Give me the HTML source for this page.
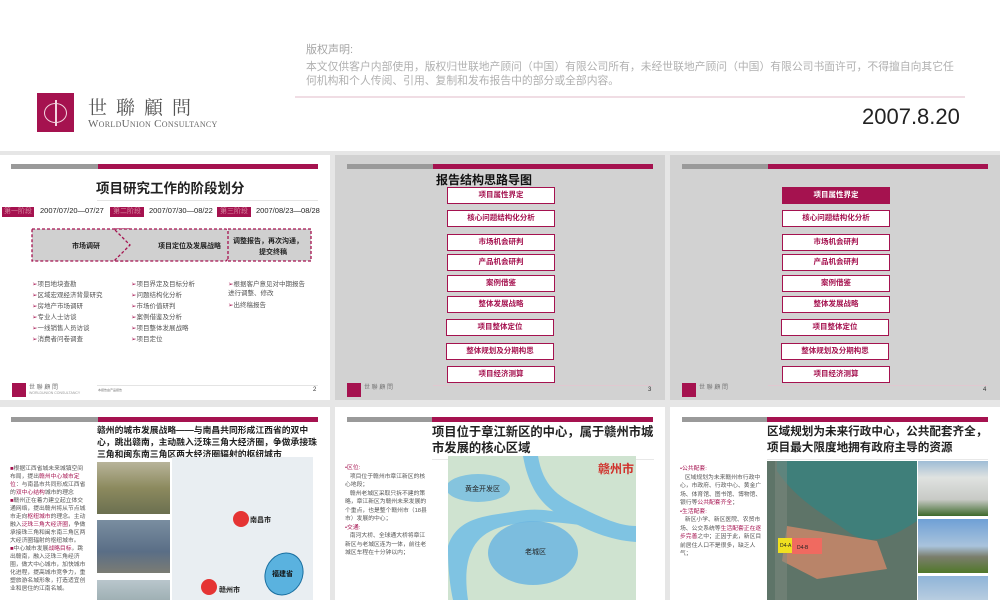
<!DOCTYPE html>
<html><head><meta charset="utf-8"><style>
*{margin:0;padding:0;box-sizing:border-box}
body{width:1000px;height:600px;overflow:hidden;position:relative;background:#e6e6e6;font-family:"Liberation Sans","Noto Sans CJK SC",sans-serif}
.a{position:absolute}
.sl{position:absolute;overflow:hidden}
.bar{position:absolute;height:5px;background:#a5124f}
.barg{position:absolute;height:5px;background:#9a9a9a}
.box{position:absolute;width:108px;height:17px;background:#fff;border:1.5px solid #a5124f;color:#a5124f;font-size:7.5px;font-weight:bold;text-align:center;line-height:14px}
.li{font-size:6.5px;color:#555;line-height:11px}
.m{color:#a5124f}
.sm{font-size:6px;color:#555;line-height:10.5px}
.logo{position:absolute;width:14px;height:14px;background:#a5124f}
</style></head><body>
<!-- header -->
<div class="a" style="left:0;top:0;width:1000px;height:151px;background:#fff"></div>
<div class="a" style="left:306px;top:41px;font-size:11px;color:#a5a5a5">版权声明:</div>
<div class="a" style="left:306px;top:60px;width:655px;font-size:10.8px;color:#b0b0b0;line-height:14px">本文仅供客户内部使用，版权归世联地产顾问（中国）有限公司所有，未经世联地产顾问（中国）有限公司书面许可，不得擅自向其它任何机构和个人传阅、引用、复制和发布报告中的部分或全部内容。</div>
<div class="a" style="left:295px;top:96px;width:670px;height:2px;background:#f0dde4"></div>
<div class="a" style="left:862px;top:104px;font-size:22px;color:#222">2007.8.20</div>
<div class="a" style="left:37px;top:93px;width:37px;height:39px;background:#a5124f"></div>
<div class="a" style="left:44px;top:103px;width:23px;height:20px;border:1.5px solid #f3d6e0;border-radius:50%"></div>
<div class="a" style="left:55px;top:100px;width:1.5px;height:26px;background:#f3d6e0"></div>
<div class="a" style="left:88px;top:93px;font-family:'Noto Serif CJK SC',serif;font-size:19px;letter-spacing:9px;color:#555">世聯顧問</div>
<div class="a" style="left:88px;top:118px;font-family:'Liberation Serif',serif;font-size:11px;font-variant:small-caps;color:#666;letter-spacing:0.3px">WorldUnion Consultancy</div>

<!-- slide 1 -->
<div class="sl" style="left:0;top:155px;width:330px;height:245px;background:#fff">
 <div class="barg" style="left:11px;top:9px;width:87px"></div><div class="bar" style="left:98px;top:9px;width:220px"></div>
 <div class="a" style="left:96px;top:22px;font-size:13.5px;font-weight:bold;color:#222">项目研究工作的阶段划分</div>
 <div class="a" style="left:97px;top:45px;width:221px;height:1px;background:#e4e4e4"></div>
 <div class="a" style="left:2px;top:52px;width:32px;height:10px;background:#a5124f;color:#d6859f;font-size:7px;line-height:10px;text-align:center">第一阶段</div>
 <div class="a" style="left:40px;top:51px;font-size:7.5px;color:#222">2007/07/20—07/27</div>
 <div class="a" style="left:110px;top:52px;width:34px;height:10px;background:#a5124f;color:#d6859f;font-size:7px;line-height:10px;text-align:center">第二阶段</div>
 <div class="a" style="left:149px;top:51px;font-size:7.5px;color:#222">2007/07/30—08/22</div>
 <div class="a" style="left:217px;top:52px;width:34px;height:10px;background:#a5124f;color:#d6859f;font-size:7px;line-height:10px;text-align:center">第三阶段</div>
 <div class="a" style="left:256px;top:51px;font-size:7.5px;color:#222">2007/08/23—08/28</div>
 <svg class="a" style="left:30px;top:72px" width="290" height="38">
  <polygon points="2,2 100,2 116,18 100,34 2,34" fill="#d0d0d0" stroke="#a5124f" stroke-dasharray="3,2" stroke-width="1.3"/>
  <polygon points="84,2 196,2 212,18 196,34 84,34 100,18" fill="#d0d0d0" stroke="#a5124f" stroke-dasharray="3,2" stroke-width="1.3"/>
  <rect x="198" y="2" width="83" height="32" fill="#d0d0d0" stroke="#a5124f" stroke-dasharray="3,2" stroke-width="1.3"/>
  <text x="42" y="21" font-size="7" font-weight="bold" fill="#222">市场调研</text>
  <text x="128" y="21" font-size="7" font-weight="bold" fill="#222">项目定位及发展战略</text>
  <text x="203" y="16" font-size="7" font-weight="bold" fill="#222">调整报告，再次沟通，</text>
  <text x="229" y="27" font-size="7" font-weight="bold" fill="#222">提交终稿</text>
 </svg>
 <div class="a li" style="left:32px;top:124px"><span class="m">➢</span>项目地块查勘<br><span class="m">➢</span>区域宏观经济背景研究<br><span class="m">➢</span>房地产市场调研<br><span class="m">➢</span>专业人士访谈<br><span class="m">➢</span>一线销售人员访谈<br><span class="m">➢</span>消费者问卷调查</div>
 <div class="a li" style="left:131px;top:124px"><span class="m">➢</span>项目界定及目标分析<br><span class="m">➢</span>问题结构化分析<br><span class="m">➢</span>市场价值研判<br><span class="m">➢</span>案例借鉴及分析<br><span class="m">➢</span>项目整体发展战略<br><span class="m">➢</span>项目定位</div>
 <div class="a li" style="left:228px;top:125px;line-height:9px"><span class="m">➢</span>根据客户意见对中期报告<br>进行调整、修改<br><div style="height:3px"></div><span class="m">➢</span>出终稿报告</div>
 <div class="logo" style="left:12px;top:228px"></div><div class="a" style="left:29px;top:227px;font-size:6px;color:#777">世 聯 顧 問</div><div class="a" style="left:29px;top:236px;font-size:3.5px;color:#999">WORLDUNION CONSULTANCY</div>
 <div class="a" style="left:97px;top:230px;width:221px;height:1px;background:#e4e4e4"></div>
 <div class="a" style="left:98px;top:233px;font-size:3px;color:#777">本报告由产品报告</div>
 <div class="a" style="left:313px;top:232px;font-size:6px;color:#333">2</div>
</div>

<!-- slides 2,3 -->
<div class="sl" style="left:335px;top:155px;width:330px;height:245px;background:#d2d2d2">
 <div class="barg" style="left:12px;top:9px;width:86px"></div><div class="bar" style="left:98px;top:9px;width:220px"></div>
 <div class="a" style="left:101px;top:16px;font-size:12px;font-weight:bold;color:#111">报告结构思路导图</div>
 <div class="box" style="left:112px;top:32px">项目属性界定</div>
 <div class="box" style="left:112px;top:55px">核心问题结构化分析</div>
 <div class="box" style="left:112px;top:79px">市场机会研判</div>
 <div class="box" style="left:112px;top:99px">产品机会研判</div>
 <div class="box" style="left:112px;top:120px">案例借鉴</div>
 <div class="box" style="left:112px;top:141px">整体发展战略</div>
 <div class="box" style="left:111px;top:164px">项目整体定位</div>
 <div class="box" style="left:111px;top:188px">整体规划及分期构思</div>
 <div class="box" style="left:112px;top:211px">项目经济测算</div>
 <div class="logo" style="left:12px;top:228px"></div><div class="a" style="left:29px;top:227px;font-size:6px;color:#777">世 聯 顧 問</div>
 <div class="a" style="left:98px;top:230px;width:220px;height:1px;background:#e0c8d0"></div>
 <div class="a" style="left:313px;top:232px;font-size:6px;color:#333">3</div>
</div>
<div class="sl" style="left:670px;top:155px;width:330px;height:245px;background:#d2d2d2">
 <div class="barg" style="left:12px;top:9px;width:86px"></div><div class="bar" style="left:98px;top:9px;width:220px"></div>
 <div class="box" style="left:112px;top:32px;background:#a5124f;color:#fff">项目属性界定</div>
 <div class="box" style="left:112px;top:55px">核心问题结构化分析</div>
 <div class="box" style="left:112px;top:79px">市场机会研判</div>
 <div class="box" style="left:112px;top:99px">产品机会研判</div>
 <div class="box" style="left:112px;top:120px">案例借鉴</div>
 <div class="box" style="left:112px;top:141px">整体发展战略</div>
 <div class="box" style="left:111px;top:164px">项目整体定位</div>
 <div class="box" style="left:111px;top:188px">整体规划及分期构思</div>
 <div class="box" style="left:112px;top:211px">项目经济测算</div>
 <div class="logo" style="left:12px;top:228px"></div><div class="a" style="left:29px;top:227px;font-size:6px;color:#777">世 聯 顧 問</div>
 <div class="a" style="left:98px;top:230px;width:220px;height:1px;background:#e0c8d0"></div>
 <div class="a" style="left:313px;top:232px;font-size:6px;color:#333">4</div>
</div>

<!-- row 2 -->
<div class="sl" style="left:0;top:407px;width:330px;height:193px;background:#fff">
 <div class="barg" style="left:11px;top:10px;width:87px"></div><div class="bar" style="left:98px;top:10px;width:220px"></div>
 <div class="a" style="left:97px;top:17px;width:225px;font-size:8.8px;font-weight:bold;color:#222;line-height:12px">赣州的城市发展战略——与南昌共同形成江西省的双中心，跳出赣南，主动融入泛珠三角大经济圈，争做承接珠三角和闽东南三角区两大经济圈辐射的枢纽城市</div>
 <div class="a sm" style="left:10px;top:58px;width:76px;font-size:5.8px;line-height:8px"><span class="m">■</span>根据江西省城未来城镇空间布局，提出<span class="m">赣州中心城市定位</span>：与南昌市共同形成江西省的<span class="m">双中心结构</span>城市的理念<br><span class="m">■</span>赣州正在着力建立起立体交通网络，提出赣州将从节点城市走向<span class="m">枢纽城市</span>的理念。主动融入<span class="m">泛珠三角大经济圈</span>，争做承接珠三角和闽东南三角区两大经济圈辐射的枢纽城市。<br><span class="m">■</span>中心城市发展<span class="m">战略目标</span>，跳出赣南，融入泛珠三角经济圈，做大中心城市，加快城市化进程，提高城市竞争力，重塑旅游名城形象，打造适宜创业和居住的江南名城。</div>
 <div class="a" style="left:97px;top:55px;width:73px;height:52px;background:linear-gradient(#b8b49a,#8c8a5e 50%,#6b7050)"></div>
 <div class="a" style="left:97px;top:113px;width:73px;height:53px;background:linear-gradient(#7a8ea0,#5a6e86 60%,#7b7c74)"></div>
 <div class="a" style="left:97px;top:173px;width:73px;height:20px;background:linear-gradient(#b9c6cc,#9fb0b4)"></div>
 <div class="a" style="left:172px;top:50px;width:141px;height:143px;background:#e9eef2"></div>
 <div class="a" style="left:233px;top:104px;width:16px;height:16px;border-radius:50%;background:#e53434"></div>
 <div class="a" style="left:250px;top:108px;font-size:7px;font-weight:bold;color:#222">南昌市</div>
 <div class="a" style="left:265px;top:145px;width:38px;height:44px;border-radius:50%;background:#5ab2df;border:1px solid #1a6fa0;transform:rotate(25deg)"></div>
 <div class="a" style="left:272px;top:162px;font-size:7px;font-weight:bold;color:#111">福建省</div>
 <div class="a" style="left:201px;top:172px;width:16px;height:16px;border-radius:50%;background:#e53434"></div>
 <div class="a" style="left:219px;top:178px;font-size:7px;font-weight:bold;color:#222">赣州市</div>
</div>
<div class="sl" style="left:335px;top:407px;width:330px;height:193px;background:#fff">
 <div class="barg" style="left:12px;top:10px;width:85px"></div><div class="bar" style="left:97px;top:10px;width:221px"></div>
 <div class="a" style="left:97px;top:17px;width:225px;font-size:12.3px;font-weight:bold;color:#222;line-height:16px">项目位于章江新区的中心，属于赣州市城市发展的核心区域</div>
 <div class="a" style="left:97px;top:52px;width:222px;height:1px;background:#e8e8e8"></div>
 <div class="a sm" style="left:10px;top:57px;width:82px;font-size:5.8px;line-height:8.5px"><span class="m">•区位:</span><br>&nbsp;&nbsp;&nbsp;项目位于赣州市章江新区的核心地段；<br>&nbsp;&nbsp;&nbsp;赣州老城区采取只拆不建的策略，章江新区为赣州未来发展的个重点，也是整个赣州市（18县市）发展的中心；<br><span class="m">•交通:</span><br>&nbsp;&nbsp;&nbsp;南河大桥、全球通大桥将章江新区与老城区连为一体，前往老城区车程在十分钟以内；</div>
 <div class="a" style="left:113px;top:49px;width:188px;height:144px;background:#cfe3d0"></div>
 <svg class="a" style="left:113px;top:49px" width="188" height="144"><path d="M90 0 C95 30 110 40 130 50 C150 60 170 70 188 70 L188 86 C160 84 140 74 120 64 C100 54 82 40 75 0Z" fill="#7fc3e2"/><path d="M0 90 C10 60 40 60 70 55 C100 50 120 60 140 62 L140 70 C110 66 80 62 50 72 C20 82 15 110 20 144 L5 144 C0 120 0 100 0 90Z" fill="#7fc3e2"/><ellipse cx="30" cy="32" rx="32" ry="14" fill="#7cc0df" opacity=".9"/><ellipse cx="85" cy="97" rx="45" ry="32" fill="#6db6e0" opacity=".85"/></svg>
 <div class="a" style="left:130px;top:77px;font-size:7px;color:#222">黄金开发区</div>
 <div class="a" style="left:190px;top:140px;font-size:7px;color:#222">老城区</div>
 <div class="a" style="left:263px;top:53px;font-size:12px;font-weight:bold;color:#d0302a">赣州市</div>
</div>
<div class="sl" style="left:670px;top:407px;width:330px;height:193px;background:#fff">
 <div class="barg" style="left:12px;top:10px;width:85px"></div><div class="bar" style="left:97px;top:10px;width:221px"></div>
 <div class="a" style="left:97px;top:17px;width:230px;font-size:11.6px;font-weight:bold;color:#222;line-height:16px;white-space:nowrap">区域规划为未来行政中心，公共配套齐全，<br>项目最大限度地拥有政府主导的资源</div>
 <div class="a" style="left:97px;top:52px;width:221px;height:1px;background:#e8e8e8"></div>
 <div class="a sm" style="left:10px;top:58px;width:82px;font-size:5.8px;line-height:8.5px"><span class="m">•公共配套:</span><br>&nbsp;&nbsp;&nbsp;区域规划为未来赣州市行政中心，市政府、行政中心、黄金广场、体育馆、图书馆、博物馆、银行等<span class="m">公共配套齐全</span>；<br><span class="m">•生活配套:</span><br>&nbsp;&nbsp;&nbsp;新区小学、新区医院、农贸市场、公交系统等<span class="m">生活配套正在逐步完善</span>之中；正因于此，新区目前居住人口不是很多，缺乏人气；</div>
 <div class="a" style="left:97px;top:54px;width:150px;height:139px;background:#5e7468"></div>
 <svg class="a" style="left:97px;top:54px" width="150" height="139"><path d="M10 0 L150 0 L150 60 C120 80 100 85 80 70 C60 55 30 40 10 10Z" fill="#3f7f7a"/><path d="M20 65 L110 80 L120 108 L50 118 L15 100Z" fill="#d88a6a" opacity=".75"/><rect x="8" y="0" width="12" height="139" fill="#7e8a80" opacity=".5"/></svg>
 <div class="a" style="left:108px;top:131px;width:14px;height:15px;background:#f0e020"></div>
 <div class="a" style="left:122px;top:131px;width:30px;height:16px;background:#f06a60"></div>
 <div class="a" style="left:110px;top:136px;font-size:5px;color:#222">D4-A</div>
 <div class="a" style="left:127px;top:138px;font-size:5px;color:#222">D4-B</div>
 <div class="a" style="left:248px;top:54px;width:70px;height:55px;background:linear-gradient(#9fbdd6 0,#dfe2e0 30%,#c8cac6 70%,#3e6a2c)"></div>
 <div class="a" style="left:248px;top:112px;width:70px;height:54px;background:linear-gradient(#6fa0d6,#a9c3dc 50%,#7b7e6c 70%,#50782a)"></div>
 <div class="a" style="left:248px;top:169px;width:70px;height:24px;background:linear-gradient(#8fb4d8,#b8cde0)"></div>
</div>
</body></html>
